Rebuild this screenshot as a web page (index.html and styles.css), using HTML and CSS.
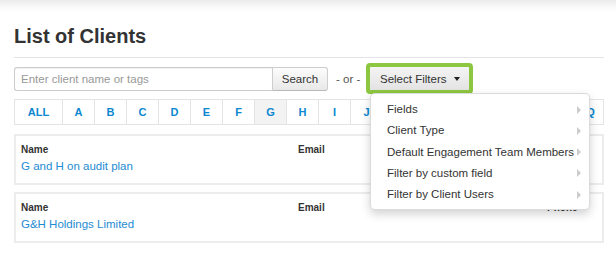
FILE: index.html
```html
<!DOCTYPE html>
<html>
<head>
<meta charset="utf-8">
<link rel="stylesheet" href="styles.css">
</head>
<body>
<div class="page">
  <h1 class="title">List of Clients</h1>
  <hr class="rule">
  <div class="toolbar">
    <div class="search-group">
      <input class="search-input" type="text" placeholder="Enter client name or tags">
      <button class="search-btn">Search</button>
    </div>
    <span class="or">- or -</span>
    <div class="filter-wrap">
      <button class="filter-btn">Select Filters <span class="caret"></span></button>
      <ul class="menu">
        <li class="menu-item">Fields<span class="arrow"></span></li>
        <li class="menu-item">Client Type<span class="arrow"></span></li>
        <li class="menu-item">Default Engagement Team Members<span class="arrow"></span></li>
        <li class="menu-item">Filter by custom field<span class="arrow"></span></li>
        <li class="menu-item">Filter by Client Users<span class="arrow"></span></li>
      </ul>
    </div>
  </div>
  <div class="alpha">
    <a class="cell cell-all">ALL</a><a class="cell">A</a><a class="cell">B</a><a class="cell">C</a><a class="cell">D</a><a class="cell">E</a><a class="cell">F</a><a class="cell active">G</a><a class="cell">H</a><a class="cell">I</a><a class="cell">J</a><a class="cell">K</a><a class="cell">L</a><a class="cell">M</a><a class="cell">N</a><a class="cell">O</a><a class="cell">P</a><a class="cell">Q</a>
  </div>
  <div class="card">
    <div class="col">
      <div class="label">Name</div>
      <a class="link">G and H on audit plan</a>
    </div>
    <div class="col"><div class="label">Email</div></div>
    <div class="col"><div class="label">Phone</div></div>
  </div>
  <div class="card">
    <div class="col">
      <div class="label">Name</div>
      <a class="link">G&amp;H Holdings Limited</a>
    </div>
    <div class="col"><div class="label">Email</div></div>
    <div class="col"><div class="label">Phone</div></div>
  </div>
</div>
</body>
</html>
```
FILE: styles.css
```css
html, body {
  margin: 0;
  padding: 0;
}
body {
  font-family: "Liberation Sans", Arial, Helvetica, sans-serif;
  color: #333;
  background: linear-gradient(to bottom, #ebebeb 0, #f7f7f7 6px, #fff 12px) no-repeat;
  background-color: #fff;
  width: 616px;
  height: 257px;
  overflow: hidden;
}
.page {
  padding: 0 12px 0 14px;
}
.title {
  margin: 24px 0 9px;
  font-size: 20px;
  line-height: 24px;
  font-weight: bold;
  color: #333;
}
.rule {
  margin: 0;
  border: 0;
  border-top: 1px solid #e4e4e4;
  height: 0;
}
.toolbar {
  margin-top: 5px;
  height: 31px;
  display: flex;
  align-items: center;
}
.search-group {
  display: flex;
  height: 24px;
  margin-top: 1px;
}
.search-input {
  box-sizing: border-box;
  width: 258px;
  height: 24px;
  margin: 0;
  padding: 0 6px;
  border: 1px solid #ccc;
  border-right: 0;
  border-radius: 3px 0 0 3px;
  font-family: inherit;
  font-size: 11.5px;
  color: #555;
  background: #fff;
  box-shadow: inset 0 1px 1px rgba(0,0,0,0.06);
}
.search-input::placeholder {
  color: #999;
}
.search-btn {
  box-sizing: border-box;
  width: 56px;
  height: 24px;
  margin: 0;
  padding: 0;
  border: 1px solid #cdcdcd;
  border-bottom-color: #b8b8b8;
  border-radius: 0 3px 3px 0;
  background: linear-gradient(to bottom, #fcfcfc, #e8e8e8);
  font-family: inherit;
  font-size: 11.5px;
  color: #333;
}
.or {
  margin-left: 8px;
  font-size: 11.5px;
  color: #555;
  width: 24px;
  white-space: nowrap;
}
.filter-wrap {
  position: relative;
  margin-left: 6px;
}
.filter-btn {
  box-sizing: border-box;
  width: 107px;
  height: 31px;
  margin: 0;
  padding: 0 0 0 10px;
  border: 4px solid #8dc63f;
  border-radius: 4px;
  background: linear-gradient(to bottom, #f4f4f4, #e3e3e3);
  font-family: inherit;
  font-size: 11.5px;
  color: #333;
  text-align: left;
  display: flex;
  align-items: center;
}
.caret {
  display: inline-block;
  width: 0;
  height: 0;
  margin-left: 8px;
  border-top: 4px solid #222;
  border-left: 3.5px solid transparent;
  border-right: 3.5px solid transparent;
}
.menu {
  position: absolute;
  left: 4px;
  top: 30px;
  z-index: 5;
  box-sizing: border-box;
  width: 220px;
  margin: 0;
  padding: 5px 0 4px;
  list-style: none;
  background: #fff;
  border: 1px solid rgba(0,0,0,0.14);
  border-radius: 5px;
  box-shadow: 0 4px 10px rgba(0,0,0,0.18);
}
.menu-item {
  position: relative;
  height: 21.25px;
  line-height: 21.25px;
  padding-left: 16px;
  font-size: 11.5px;
  color: #333;
  white-space: nowrap;
}
.arrow {
  position: absolute;
  right: 8px;
  top: 6.5px;
  width: 0;
  height: 0;
  border-left: 4px solid #ccc;
  border-top: 4px solid transparent;
  border-bottom: 4px solid transparent;
}
.alpha {
  margin-top: 5px;
  width: 590px;
  height: 26px;
  box-sizing: border-box;
  border: 1px solid #e4e4e4;
  display: flex;
  overflow: hidden;
}
.cell {
  flex: 0 0 auto;
  box-sizing: border-box;
  width: 32px;
  height: 24px;
  line-height: 24px;
  text-align: center;
  font-size: 11px;
  font-weight: bold;
  color: #0b87d0;
  border-right: 1px solid #e4e4e4;
}
.cell-all {
  width: 48px;
}
.cell.active {
  background: #f3f3f3;
  color: #0b87d0;
}
.card {
  margin-top: 9px;
  width: 590px;
  height: 51px;
  box-sizing: border-box;
  border: 2px solid #ececec;
  padding: 8px 0 0 5px;
  display: grid;
  grid-template-columns: 277px 249px 1fr;
}
.card + .card {
  margin-top: 7px;
}
.label {
  font-size: 10px;
  font-weight: bold;
  line-height: 12px;
  color: #333;
}
.link {
  display: block;
  margin-top: 2px;
  font-size: 11.5px;
  line-height: 16px;
  color: #1e8bd3;
  white-space: nowrap;
}
```
